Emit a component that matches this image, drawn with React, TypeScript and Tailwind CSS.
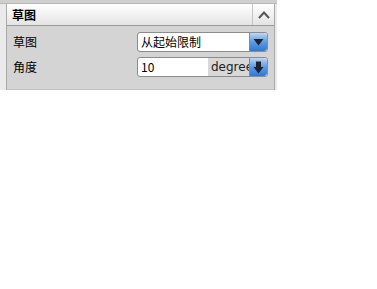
import React from "react";

const font = { fontFamily: '"Noto Sans CJK SC", "DejaVu Sans", sans-serif' };

function BlueBtn({ arrow }: { arrow: "tri" | "down" }) {
  return (
    <div className="w-[18px] shrink-0 h-full rounded-r-[3px] bg-gradient-to-b from-[#bcd6f5] via-[#5d9be3] to-[#2f78d6] flex items-center justify-center border-l border-[#6a8fbf]">
      {arrow === "tri" ? (
        <svg width="11" height="8" viewBox="0 0 11 8">
          <path d="M0.5 1 L10.5 1 L5.5 7.5 Z" fill="#1c2430" />
        </svg>
      ) : (
        <svg width="11" height="13" viewBox="0 0 11 13">
          <path d="M3 0.5 H8 V6 H10.5 L5.5 12.5 L0.5 6 H3 Z" fill="#1c2430" />
        </svg>
      )}
    </div>
  );
}

export default function App() {
  return (
    <div className="w-[377px] h-[289px] bg-white" style={font}>
      <div className="w-[277px] h-[90px] bg-[#eaeaea] flex flex-col">
        <div className="h-[4px] shrink-0 bg-[#cfcfcf] border-b border-[#b8b8b8]" />
        <div className="flex flex-1 min-w-0 pl-[6px] pr-[2px]">
          <div className="flex-1 min-w-0 flex flex-col border-l border-r border-[#a9a9a9]">
            <div className="h-[22px] shrink-0 flex items-stretch bg-gradient-to-b from-white to-[#e4e4e4] border-b border-[#9c9c9c]">
              <div className="flex-1 flex items-center pl-[5px] text-[12px] font-bold text-black leading-none">草图</div>
              <div className="w-[22px] border-l border-[#c4c4c4] flex items-center justify-center">
                <svg width="12" height="8" viewBox="0 0 12 8">
                  <path d="M1 7 L6 1.5 L11 7" fill="none" stroke="#555" strokeWidth="2" />
                </svg>
              </div>
            </div>
            <div className="flex-1 bg-[#d4d4d4] pt-[6px] pl-[6px] pr-[6px] flex flex-col gap-[5px] border-b border-[#c2c2c2]">
              <div className="flex items-center h-[20px] min-w-0">
                <div className="w-[124px] shrink-0 text-[12px] text-black leading-none">草图</div>
                <div className="flex-1 min-w-0 h-[20px] bg-white border border-[#8c8c8c] rounded-[3px] flex items-stretch overflow-hidden">
                  <div className="flex-1 min-w-0 flex items-center pl-[3px] text-[12px] text-black leading-none">从起始限制</div>
                  <BlueBtn arrow="tri" />
                </div>
              </div>
              <div className="flex items-center h-[20px] min-w-0">
                <div className="w-[124px] shrink-0 text-[12px] text-black leading-none">角度</div>
                <div className="flex-1 min-w-0 h-[20px] bg-white border border-[#8c8c8c] rounded-[3px] flex items-stretch overflow-hidden">
                  <div className="w-[70px] shrink-0 flex items-center pl-[3px] text-[12px] text-black leading-none">10</div>
                  <div className="flex-1 min-w-0 bg-[#d8d8d8] flex items-center pl-[3px] text-[12px] text-[#222] leading-none overflow-hidden whitespace-nowrap" style={{ fontFamily: '"DejaVu Sans", sans-serif' }}>degrees</div>
                  <BlueBtn arrow="down" />
                </div>
              </div>
            </div>
          </div>
        </div>
      </div>
    </div>
  );
}
